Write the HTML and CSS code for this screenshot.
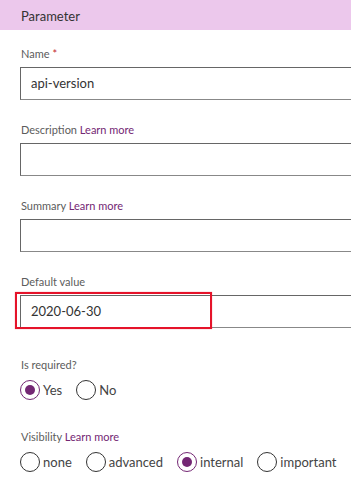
FILE: index.html
```html
<!DOCTYPE html>
<html>
<head>
<meta charset="utf-8">
<link rel="stylesheet" href="styles.css">
</head>
<body>
<div class="header">Parameter</div>
<div class="form">
  <div class="field">
    <div class="label">Name <span class="req">*</span></div>
    <div class="input">api-version</div>
  </div>
  <div class="field">
    <div class="label">Description <span class="link">Learn more</span></div>
    <div class="input"></div>
  </div>
  <div class="field">
    <div class="label">Summary <span class="link">Learn more</span></div>
    <div class="input"></div>
  </div>
  <div class="field">
    <div class="label">Default value</div>
    <div class="input-wrap">
      <div class="input">2020-06-30</div>
      <div class="highlight"></div>
    </div>
  </div>
  <div class="field radio-field">
    <div class="label">Is required?</div>
    <div class="radios">
      <div class="radio checked"><span class="circle"></span>Yes</div>
      <div class="radio"><span class="circle"></span>No</div>
    </div>
  </div>
  <div class="field radio-field">
    <div class="label">Visibility <span class="link">Learn more</span></div>
    <div class="radios">
      <div class="radio"><span class="circle"></span>none</div>
      <div class="radio"><span class="circle"></span>advanced</div>
      <div class="radio checked"><span class="circle"></span>internal</div>
      <div class="radio"><span class="circle"></span>important</div>
    </div>
  </div>
</div>
</body>
</html>
```
FILE: styles.css
```css
* { box-sizing: border-box; }
html, body {
  margin: 0;
  padding: 0;
  background: #fff;
  overflow: hidden;
}
body {
  font-family: Lato, "Open Sans", sans-serif;
  color: #333;
  width: 351px;
  height: 489px;
}
.header {
  height: 30px;
  background: #ecc8ec;
  padding-left: 21px;
  font-size: 13px;
  line-height: 32px;
  color: #333;
}
.form {
  padding: 16px 0 0 20px;
}
.field {
  margin-bottom: 22px;
}
.label {
  font-size: 11px;
  line-height: 16px;
  color: #5c5c5c;
  padding-left: 1px;
  margin-bottom: 5px;
}
.req { color: #c4262e; }
.link { color: #742774; }
.input-wrap { position: relative; }
.input {
  height: 33px;
  width: 340px;
  border: 1px solid #666;
  border-bottom-color: #888;
  border-right: none;
  padding-left: 10px;
  font-size: 13px;
  line-height: 31px;
  color: #333;
}
.highlight {
  position: absolute;
  left: -5px;
  top: -3px;
  width: 197px;
  height: 37px;
  border: 2px solid #e5132a;
  box-shadow: 0 0 1px rgba(229, 19, 42, 0.5);
}
.radio-field { margin-bottom: 29px; }
.field:nth-child(4) { margin-bottom: 29px; }
.radio-field .label { margin-bottom: 7px; }
.radios {
  display: flex;
  gap: 14px;
  height: 20px;
  align-items: center;
}
.radio {
  display: flex;
  align-items: center;
  font-size: 13px;
  color: #444;
}
.circle {
  width: 20px;
  height: 20px;
  border-radius: 50%;
  border: 1px solid #333;
  margin-right: 3px;
  display: flex;
  align-items: center;
  justify-content: center;
}
.radio.checked .circle { border-color: #742774; }
.radio.checked .circle::after {
  content: "";
  width: 10px;
  height: 10px;
  border-radius: 50%;
  background: #742774;
}
```
